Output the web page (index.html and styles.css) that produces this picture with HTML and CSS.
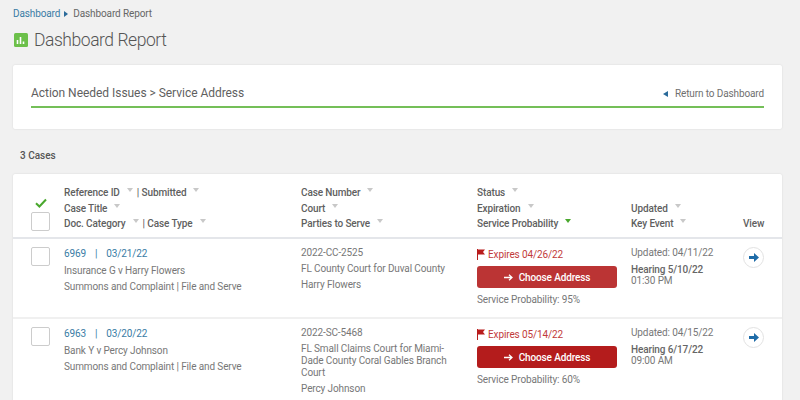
FILE: index.html
```html
<!DOCTYPE html>
<html lang="en">
<head>
<meta charset="utf-8">
<title>Dashboard Report</title>
<link rel="stylesheet" href="styles.css">
</head>
<body>
<main class="page">
  <nav class="crumbs"><a class="link" href="#">Dashboard</a><span class="crumb-arrow"></span><span>Dashboard Report</span></nav>
  <header class="title-row">
    <svg class="title-icon" viewBox="0 0 14 14" width="14" height="14"><rect width="14" height="14" rx="1.5" fill="#6cc04a"/><path d="M3.5 7v4M6.5 4v7M9.5 8.5V11" stroke="#fff" stroke-width="1.6" fill="none"/></svg>
    <h1 class="title">Dashboard Report</h1>
  </header>
  <section class="card action-card">
    <div class="action-bar">
      <span class="action-title">Action Needed Issues &gt; Service Address</span>
      <a class="return" href="#"><span class="return-arrow"></span>Return to Dashboard</a>
    </div>
  </section>
  <div class="count">3 Cases</div>
  <section class="card cases">
    <div class="row head">
      <div class="c-check head-check">
        <svg class="check" viewBox="0 0 12 10" width="12" height="10"><path d="M1 5.2 4.4 8.5 11 1.5" stroke="#4aa82e" stroke-width="2" fill="none"/></svg>
        <span class="box"></span>
      </div>
      <div class="c-ref">
        <div class="hl">Reference ID<i class="sort"></i><span class="sep">| Submitted</span><i class="sort tight"></i></div>
        <div class="hl">Case Title<i class="sort"></i></div>
        <div class="hl">Doc. Category<i class="sort"></i><span class="sep">| Case Type</span><i class="sort"></i></div>
      </div>
      <div class="c-case">
        <div class="hl">Case Number<i class="sort"></i></div>
        <div class="hl">Court<i class="sort"></i></div>
        <div class="hl">Parties to Serve<i class="sort"></i></div>
      </div>
      <div class="c-status">
        <div class="hl">Status<i class="sort"></i></div>
        <div class="hl">Expiration<i class="sort"></i></div>
        <div class="hl">Service Probability<i class="sort active"></i></div>
      </div>
      <div class="c-upd">
        <div class="hl">Updated<i class="sort"></i></div>
        <div class="hl">Key Event<i class="sort"></i></div>
      </div>
      <div class="c-view"><div class="hl">View</div></div>
    </div>

    <div class="row body">
      <div class="c-check"><span class="box"></span></div>
      <div class="c-ref">
        <div class="ln ref"><a class="link" href="#">6969</a><span class="pipe">|</span><a class="link" href="#">03/21/22</a></div>
        <div class="ln">Insurance G v Harry Flowers</div>
        <div class="ln">Summons and Complaint | File and Serve</div>
      </div>
      <div class="c-case">
        <div class="ln">2022-CC-2525</div>
        <div class="ln">FL County Court for Duval County</div>
        <div class="ln">Harry Flowers</div>
      </div>
      <div class="c-status">
        <div class="expires"><svg class="flag" viewBox="0 0 8 11" width="8" height="11"><path d="M0 0h1v11H0zM1 .5h7L6 3l2 2.5H1z" fill="#b81c1c"/></svg>Expires 04/26/22</div>
        <a class="choose lighter" href="#"><svg class="arrow" viewBox="0 0 9 7" width="9" height="7"><path d="M0 3.5h8M5 .7l3 2.8-3 2.8" stroke="#fff" stroke-width="1.3" fill="none"/></svg>Choose Address</a>
        <div class="prob">Service Probability: 95%</div>
      </div>
      <div class="c-upd">
        <div class="ln">Updated: 04/11/22</div>
        <div class="event">Hearing 5/10/22</div>
        <div class="time">01:30 PM</div>
      </div>
      <div class="c-view"><a class="go" href="#"><svg viewBox="0 0 10 9" width="10" height="9"><path d="M0 3h5V0l5 4.5L5 9V6H0z" fill="#1f6ca8"/></svg></a></div>
    </div>

    <div class="row body">
      <div class="c-check"><span class="box"></span></div>
      <div class="c-ref">
        <div class="ln ref"><a class="link" href="#">6963</a><span class="pipe">|</span><a class="link" href="#">03/20/22</a></div>
        <div class="ln">Bank Y v Percy Johnson</div>
        <div class="ln">Summons and Complaint | File and Serve</div>
      </div>
      <div class="c-case">
        <div class="ln">2022-SC-5468</div>
        <div class="ln wrap">FL Small Claims Court for Miami-Dade County Coral Gables Branch Court</div>
        <div class="ln">Percy Johnson</div>
      </div>
      <div class="c-status">
        <div class="expires"><svg class="flag" viewBox="0 0 8 11" width="8" height="11"><path d="M0 0h1v11H0zM1 .5h7L6 3l2 2.5H1z" fill="#b81c1c"/></svg>Expires 05/14/22</div>
        <a class="choose" href="#"><svg class="arrow" viewBox="0 0 9 7" width="9" height="7"><path d="M0 3.5h8M5 .7l3 2.8-3 2.8" stroke="#fff" stroke-width="1.3" fill="none"/></svg>Choose Address</a>
        <div class="prob">Service Probability: 60%</div>
      </div>
      <div class="c-upd">
        <div class="ln">Updated: 04/15/22</div>
        <div class="event">Hearing 6/17/22</div>
        <div class="time">09:00 AM</div>
      </div>
      <div class="c-view"><a class="go" href="#"><svg viewBox="0 0 10 9" width="10" height="9"><path d="M0 3h5V0l5 4.5L5 9V6H0z" fill="#1f6ca8"/></svg></a></div>
    </div>
  </section>
</main>
</body>
</html>
```
FILE: styles.css
```css
* { box-sizing: border-box; }
html, body { margin: 0; height: 400px; overflow: hidden; background: #f1f1f1; }
body { font-family: Roboto, "Liberation Sans", sans-serif; font-size: 10px; letter-spacing: -0.12px; color: #777; }
a { text-decoration: none; }
.page { width: 782px; padding-left: 13px; }
.link { color: #3a7ca5; }

.crumbs { display: flex; align-items: center; height: 13px; margin-top: 7px; color: #666; }
.crumb-arrow { width: 0; height: 0; margin: 0 5px 0 4px; border-left: 4px solid #2a6a9a; border-top: 3px solid transparent; border-bottom: 3px solid transparent; }

.title-row { display: flex; align-items: center; height: 26px; margin-top: 7px; padding-left: 1px; }
.title-icon { margin-right: 6px; }
.title { margin: 0; font-size: 17.5px; font-weight: 300; color: #555; letter-spacing: -0.45px; }

.card { background: #fff; border-radius: 2px; box-shadow: 0 0 2px rgba(0,0,0,.12); }
.action-card { height: 64px; margin-top: 12px; padding: 17px 18px 0; }
.action-bar { display: flex; justify-content: space-between; align-items: center; height: 26px; padding-bottom: 3px; border-bottom: 2px solid #74bf58; }
.action-title { font-size: 12px; letter-spacing: -0.04px; color: #5f5f5f; }
.return { display: flex; align-items: center; color: #6f6f6f; padding-top: 2px; }
.return-arrow { width: 0; height: 0; margin-right: 7px; border-right: 5px solid #2a6a9a; border-top: 3px solid transparent; border-bottom: 3px solid transparent; }

.count { height: 45px; padding: 21px 0 0 7px; font-size: 10px; font-weight: 500; letter-spacing: 0; color: #555; }

.cases { height: 240px; }
.row { display: grid; grid-template-columns: 51px 237px 176px 154px 110px 41px; }
.head { height: 65px; padding-top: 11px; border-bottom: 2px solid #e4e6ea; }
.body { height: 80px; padding-top: 8px; border-bottom: 2px solid #f0f0f0; }
.body:last-child { border-bottom: 0; }
.c-check { padding-left: 18px; }
.head-check { display: flex; flex-direction: column; align-items: flex-start; padding-top: 13px; }
.check { margin: 0 0 4px 4px; }
.box { display: block; width: 19px; height: 19px; border: 1px solid #ccc; border-radius: 2px; background: #fff; }

.hl { height: 15.5px; line-height: 15.5px; font-weight: 500; color: #5f5f5f; white-space: nowrap; }
.head .c-upd { padding-top: 15.5px; }
.head .c-view { padding: 31px 0 0 2px; }
.sort { display: inline-block; width: 0; height: 0; margin: 0 0 4px 7px; vertical-align: middle; border-top: 4px solid #c8c8c8; border-left: 3.5px solid transparent; border-right: 3.5px solid transparent; position: relative; top: -1px; }
.sort.tight { margin-left: 6px; }
.sort.active { border-top-color: #4aa82e; }
.sep { margin-left: 4px; }

.ln { line-height: 12px; margin-bottom: 4px; }
.c-ref { padding-top: 1px; }
.head .c-ref { padding-top: 0; }
.ref { margin-bottom: 5px; }
.pipe { margin: 0 9px; color: #3a7ca5; }
.wrap { padding-right: 16px; }

.expires { display: flex; align-items: center; height: 14px; color: #c23a3a; }
.flag { margin-right: 3px; }
.choose { display: flex; align-items: center; justify-content: center; width: 140px; height: 22px; margin-top: 5px; border-radius: 3px; background: #b41c1c; color: #fff; font-weight: 500; }
.choose.lighter { background: #bb3434; }
.arrow { margin-right: 6px; }
.prob { margin-top: 5px; line-height: 13px; }

.event { margin-top: 5px; line-height: 11px; font-weight: 500; color: #666; }
.time { margin-top: 0; line-height: 11px; }

.body .c-view { padding-left: 2px; }
.go { display: flex; align-items: center; justify-content: center; width: 21px; height: 21px; border: 1px solid #e2e2e2; border-radius: 50%; background: #fff; }
```
